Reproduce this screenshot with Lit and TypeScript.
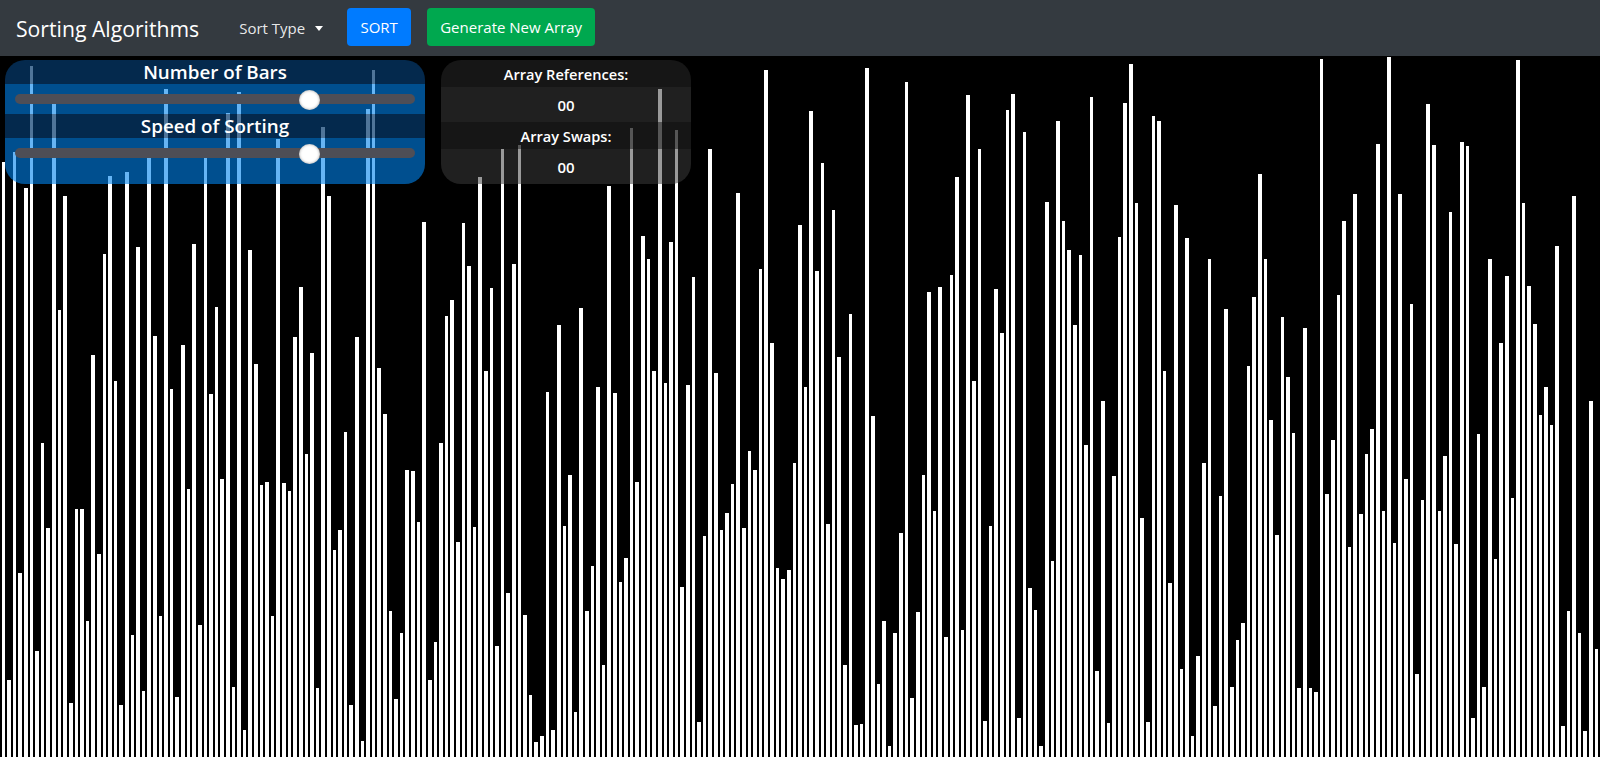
import { LitElement, html, css } from "lit";
import { customElement, state } from "lit/decorators.js";

// tops of the bars as sampled from a 2.2336x tall view of the stage
const TOPS = [
  238, 1396, 217, 1157, 298, 25, 1331, 867, 1057, 110, 570, 315, 1447, 1014, 1014, 1264, 670, 1115, 444, 270,
  728, 1452, 261, 1295, 429, 1421, 230, 628, 1253, 76, 746, 1434, 648, 969, 422, 1273,
  230, 757, 563, 947, 130, 1412, 83, 1508, 436, 690, 960, 954, 1253, 188, 956, 974, 630, 518, 891, 666,
  1414, 161, 315, 1106, 1061, 842, 1452, 630, 1532, 121, 34, 699, 802, 1242, 1438,
  1291, 927, 929, 1043, 373, 1396, 1311, 867, 583, 547, 1088, 375, 471, 1054, 273, 706, 520, 1320, 210, 1202,
  467, 202, 1251, 1430, 1534, 1521, 753, 1508, 603, 1052, 938, 1467, 565, 1242, 1141, 742,
  1363, 293, 755, 1177, 1124, 163, 954, 404, 456, 706, 76, 733, 418, 168, 1188, 737, 496, 1490, 1074, 210,
  710, 1061, 1023, 958, 308, 1057, 885, 927, 478, 34, 643, 1146, 1170, 1150, 911, 380,
  742, 125, 482, 241, 1048, 346, 675, 1363, 579, 1497, 1494, 29, 806, 1405, 1264, 1543, 1291, 1068, 60, 1436,
  1244, 938, 529, 1019, 518, 1300, 491, 273, 1284, 89, 728, 210, 1488, 1052, 523,
  621, 123, 87, 1481, 172, 1191, 1240, 1543, 328, 1130, 147, 371, 436, 603, 447, 871, 94, 1376, 773, 1492,
  940, 407, 107, 20, 331, 1034, 1490, 136, 147, 706, 1179, 335, 1371, 409, 1521, 1342,
  911, 456, 1454, 985, 567, 1412, 1307, 1269, 695, 541, 266, 456, 815, 1072, 585, 719, 844, 1414, 610, 1414,
  1423, 9, 981, 860, 536, 371, 1099, 310, 1025, 891, 835, 199, 1019, 4, 1090, 310,
  947, 556, 1383, 994, 109, 201, 1019, 896, 351, 1092, 194, 203, 1481, 847, 1412, 456, 1126, 643, 494, 989,
  11, 331, 516, 601, 804, 742, 826, 427, 1499, 1242, 315, 1291, 1510, 773, 1327,
];

@customElement("app-root")
export class AppRoot extends LitElement {
  @state() bars = TOPS.map((top) => (1568 - top) / 2.2336);
  @state() refs = "00";
  @state() swaps = "00";

  static styles = css`
    :host {
      display: flex;
      flex-direction: column;
      height: 100vh;
      overflow: hidden;
      background: #000;
      font-family: "Open Sans", "Noto Sans", sans-serif;
      color: #fff;
    }
    nav {
      flex: none;
      box-sizing: border-box;
      height: 56px;
      display: flex;
      align-items: center;
      padding: 0 16px;
      background: #343a40;
    }
    .brand {
      font-size: 21.2px;
      margin-right: 40px;
      white-space: nowrap;
    }
    .dropdown {
      display: flex;
      align-items: center;
      font-size: 15px;
      color: rgba(255, 255, 255, 0.9);
      margin-right: 24px;
      white-space: nowrap;
    }
    .caret {
      width: 0;
      height: 0;
      margin-left: 10px;
      border-top: 5px solid #fff;
      border-left: 4.5px solid transparent;
      border-right: 4.5px solid transparent;
    }
    .btn {
      box-sizing: border-box;
      height: 38px;
      margin-bottom: 2px;
      display: flex;
      align-items: center;
      justify-content: center;
      border: none;
      border-radius: 4px;
      color: #fff;
      font-family: inherit;
      font-size: 15px;
    }
    .sort {
      width: 64px;
      background: #007bff;
      margin-right: 16px;
    }
    .generate {
      width: 168px;
      background: #00a84f;
    }
    .stage {
      flex: 1;
      min-height: 0;
      position: relative;
    }
    .bars {
      height: 100%;
      display: flex;
      align-items: flex-end;
      gap: 2px;
      padding-left: 1.6px;
    }
    .bar {
      flex: none;
      width: 3.618px;
      background: #fff;
    }
    .panels {
      position: absolute;
      top: 4px;
      left: 5px;
      display: flex;
      gap: 16px;
    }
    .panel {
      border-radius: 20px;
      overflow: hidden;
      display: flex;
      flex-direction: column;
    }
    .controls {
      width: 420px;
    }
    .stats {
      width: 250px;
    }
    .title {
      height: 24px;
      display: flex;
      align-items: center;
      justify-content: center;
      font-size: 18.8px;
      font-weight: 600;
      background: rgba(6, 59, 110, 0.7);
    }
    .slider {
      display: flex;
      align-items: center;
      height: 30px;
      padding: 0 10px;
      background: rgba(0, 132, 238, 0.6);
    }
    .slider.last {
      height: 46px;
      align-items: flex-start;
      padding-top: 5px;
      box-sizing: border-box;
    }
    input[type="range"] {
      -webkit-appearance: none;
      appearance: none;
      width: 100%;
      height: 20px;
      margin: 0;
      background: transparent;
    }
    input[type="range"]::-webkit-slider-runnable-track {
      height: 10px;
      border-radius: 5px;
      background: #4e4e56;
    }
    input[type="range"]::-webkit-slider-thumb {
      -webkit-appearance: none;
      width: 21px;
      height: 20px;
      margin-top: -4px;
      border-radius: 50%;
      background: #fff;
      box-shadow: inset 0 0 3px rgba(0, 0, 0, 0.4);
    }
    .label {
      height: 27px;
      display: flex;
      align-items: center;
      justify-content: center;
      font-size: 14.6px;
      font-weight: 600;
      background: rgba(29, 29, 29, 0.75);
    }
    .value {
      height: 35px;
      display: flex;
      align-items: center;
      justify-content: center;
      font-size: 15px;
      font-weight: 600;
      background: rgba(61, 61, 61, 0.52);
    }
  `;

  render() {
    return html`
      <nav>
        <span class="brand">Sorting Algorithms</span>
        <span class="dropdown">Sort Type<span class="caret"></span></span>
        <button class="btn sort">SORT</button>
        <button class="btn generate">Generate New Array</button>
      </nav>
      <div class="stage">
        <div class="bars">
          ${this.bars.map((h) => html`<div class="bar" style="height:${h}px"></div>`)}
        </div>
        <div class="panels">
          <div class="panel controls">
            <div class="title">Number of Bars</div>
            <div class="slider"><input type="range" min="0" max="100" value="75" /></div>
            <div class="title">Speed of Sorting</div>
            <div class="slider last"><input type="range" min="0" max="100" value="75" /></div>
          </div>
          <div class="panel stats">
            <div class="label">Array References:</div>
            <div class="value">${this.refs}</div>
            <div class="label">Array Swaps:</div>
            <div class="value">${this.swaps}</div>
          </div>
        </div>
      </div>
    `;
  }
}
